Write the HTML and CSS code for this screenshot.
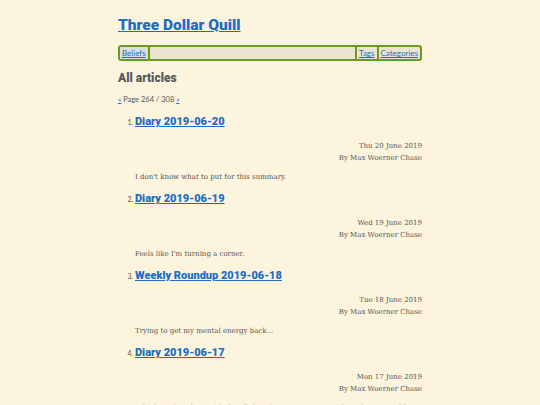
FILE: index.html
```html
<!DOCTYPE html>
<html>
<head>
<meta charset="utf-8">
<link rel="stylesheet" href="styles.css">
</head>
<body>
<div class="page">
  <header class="site-header">
    <h1 class="site-title"><a href="#">Three Dollar Quill</a></h1>
    <nav class="nav">
      <a class="nav-link nav-active" href="#">Beliefs</a>
      <span class="nav-fill"></span>
      <a class="nav-link" href="#">Tags</a>
      <a class="nav-link" href="#">Categories</a>
    </nav>
  </header>
  <main>
    <h2 class="section-title">All articles</h2>
    <p class="pager"><a href="#">«</a> Page 264 / 308 <a href="#">»</a></p>
    <ol class="articles">
      <li class="article">
        <h3 class="article-title"><a href="#">Diary 2019-06-20</a></h3>
        <div class="meta"><div>Thu 20 June 2019</div><div>By Max Woerner Chase</div></div>
        <p class="summary">I don't know what to put for this summary.</p>
      </li>
      <li class="article">
        <h3 class="article-title"><a href="#">Diary 2019-06-19</a></h3>
        <div class="meta"><div>Wed 19 June 2019</div><div>By Max Woerner Chase</div></div>
        <p class="summary">Feels like I'm turning a corner.</p>
      </li>
      <li class="article">
        <h3 class="article-title"><a href="#">Weekly Roundup 2019-06-18</a></h3>
        <div class="meta"><div>Tue 18 June 2019</div><div>By Max Woerner Chase</div></div>
        <p class="summary">Trying to get my mental energy back...</p>
      </li>
      <li class="article">
        <h3 class="article-title"><a href="#">Diary 2019-06-17</a></h3>
        <div class="meta"><div>Mon 17 June 2019</div><div>By Max Woerner Chase</div></div>
        <p class="summary">I think work is done with the all-day planning meetings, after what seems like forever.</p>
      </li>
    </ol>
  </main>
</div>
</body>
</html>
```
FILE: styles.css
```css
html, body {
  margin: 0;
  padding: 0;
  background: #fcf4dc;
}
body {
  font-family: "DejaVu Serif", serif;
  color: #555;
  font-size: 7px;
}
.page {
  width: 304px;
  margin: 0 auto;
  padding-top: 15px;
}
a { color: #1a6fc4; }
.site-title {
  font-family: "Roboto", "Lato", sans-serif;
  font-weight: 900;
  font-size: 15.5px;
  line-height: 20px;
  margin: 0 0 10px 0;
}
.nav {
  display: flex;
  align-items: stretch;
  height: 12px;
  border: 2px solid #6b9a1e;
  border-radius: 3px;
  background: #ebe4d0;
  font-family: "Lato", "Noto Sans", sans-serif;
  font-size: 8px;
  line-height: 12px;
}
.nav-link {
  padding: 0 2px;
  border-right: 2px solid #6b9a1e;
}
.nav-link:last-child { border-right: none; }
.nav-active { background: #d6dfd9; }
.nav-fill {
  flex: 1;
  border-right: 2px solid #6b9a1e;
}
.section-title {
  font-family: "Roboto", "Lato", sans-serif;
  font-weight: 900;
  font-size: 12px;
  color: #555a5e;
  margin: 9px 0 0 0;
  line-height: 16px;
}
.pager {
  font-family: "Lato", "Noto Sans", sans-serif;
  font-size: 7.5px;
  margin: 9px 0 0 0;
}
.articles {
  margin: 0;
  padding-left: 17px;
  font-family: "Lato", "Noto Sans", sans-serif;
  font-size: 7px;
}
.article-title {
  font-family: "Roboto", "Lato", sans-serif;
  font-weight: 900;
  font-size: 11px;
  line-height: 16px;
  margin: 10px 0 0 0;
}
.articles .article:first-child .article-title { margin-top: 10px; }
.meta {
  font-family: "DejaVu Serif", serif;
  font-size: 7px;
  text-align: right;
  line-height: 12px;
  margin-top: 10px;
}
.summary {
  font-family: "DejaVu Serif", serif;
  font-size: 7px;
  margin: 9px 0 0 0;
}
```
